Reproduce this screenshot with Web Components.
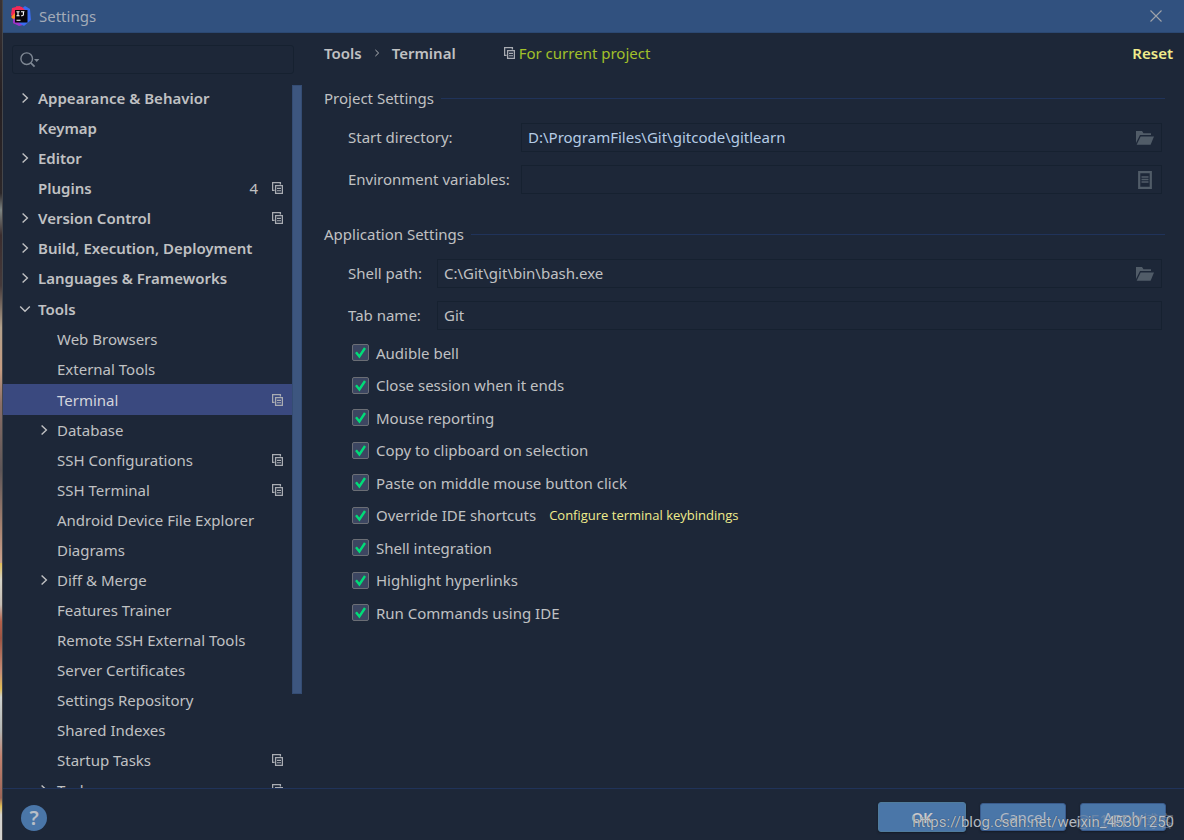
<!DOCTYPE html>
<html lang="en">
<head>
<meta charset="utf-8">
<title>Settings</title>
<style>
  :root {
    --bg: #1d2738;
    --text: #c0c1c3;
    --line: #20335a;
    --field-line: #162130;
    --button: #4a76a8;
    --link: #f0ec8c;
  }
  body {
    margin: 0;
    background: var(--bg);
    color: var(--text);
    font: 15px/20px "Noto Sans", "Open Sans", sans-serif;
  }
</style>
</head>
<body>
<settings-window></settings-window>

<script>
const ICONS = {
  copy: ['0 0 11 12', '<path d="M2.6 8.4H.6V.6h7.8v2" fill="none" stroke="currentColor" stroke-width="1.3"/><path d="M3.6 3.6h6.8v7.8H3.6z" fill="none" stroke="currentColor" stroke-width="1.3"/><path d="M5 6.4h4M5 8.8h4" stroke="currentColor" stroke-width="1.1"/>'],
  right: ['0 0 12 12', '<path d="M3.6 1.4 8.4 6l-4.8 4.6" fill="none" stroke="currentColor" stroke-width="1.4"/>'],
  down: ['0 0 12 12', '<path d="M1.2 3.5 6 8.3l4.8-4.8" fill="none" stroke="currentColor" stroke-width="1.4"/>'],
  folder: ['0 0 18 14', '<path d="M0 12V0h6l1.5 2.2H15v1.9H4z" fill="currentColor"/><path d="M4.6 5.4H18l-3.4 8.3H.7z" fill="currentColor"/>'],
  list: ['0 0 14 18', '<path d="M1.2 1.2h11.6v15.6H1.2z" fill="none" stroke="currentColor" stroke-width="2.2"/><path d="M3.5 6h7M3.5 8.5h7M3.5 11h7" stroke="currentColor" stroke-width="1.4"/>'],
  search: ['0 0 20 16', '<circle cx="6.7" cy="6.7" r="5.8" fill="none" stroke="currentColor" stroke-width="1.4"/><path d="m10.8 10.8 3.8 3.8" stroke="currentColor" stroke-width="1.8"/><path d="M14 7h5.4l-2.7 3z" fill="currentColor"/>'],
  close: ['0 0 12 12', '<path d="m.5.5 11 11M11.5.5l-11 11" stroke="currentColor" stroke-width="1.1"/>'],
  logo: ['0 0 20 20', '<path d="M1 2 9 0l4 8-8 10-3-1 1-5-3-3z" fill="#f52a58"/><path d="m0 11 4-4 4 6-4 2z" fill="#f98b24"/><path d="m2 13 6-2 4 8-4 1-6-3z" fill="#9b35c9"/><path d="m10 3 4-3 5 3 1 11-7 6-5-3z" fill="#396cf0"/><path d="m5 0 6 1 3 3-7 1z" fill="#f52a58"/><path d="M4 4h12.5v12.5H4z" fill="#080508"/><path d="M5.4 5.7h3.2M7 5.7v4M5.4 9.7h3.2M10 5.7h3.4M12.4 5.7v2.8q0 1.2-1.3 1.2h-1M5.5 14.3h4" stroke="#fff" stroke-width="1.1" fill="none"/>']
};

function define(name, html, setup) {
  const template = document.createElement('template');
  template.innerHTML = html;
  customElements.define(name, class extends HTMLElement {
    connectedCallback() {
      if (this.shadowRoot) return;
      const root = this.attachShadow({ mode: 'open' });
      root.append(template.content.cloneNode(true));
      if (setup) setup(this, root);
    }
  });
}

define('ui-icon', `
  <style>
    :host { display: block; flex: none; width: 12px; height: 12px; }
    :host([name=copy]) { width: 11px; color: #a9acb2; }
    svg { display: block; width: 100%; height: 100%; }
  </style>
  <svg aria-hidden="true"></svg>`, (host, root) => {
  const [box, body] = ICONS[host.getAttribute('name')];
  const svg = root.querySelector('svg');
  svg.setAttribute('viewBox', box);
  svg.innerHTML = body;
});

define('title-bar', `
  <style>
    :host { display: flex; align-items: center; height: 32px; padding: 0 22px 0 8px; background: #31517f; border-bottom: 1px solid #2b4872; color: #a3abb8; }
    .logo { width: 20px; height: 20px; margin-right: 8px; }
    h1 { flex: 1; margin: 0; font: inherit; }
    button { padding: 0; border: 0; background: none; color: #a0a4aa; }
  </style>
  <ui-icon class="logo" name="logo"></ui-icon>
  <h1><slot></slot></h1>
  <button aria-label="Close"><ui-icon name="close"></ui-icon></button>`);

define('search-box', `
  <style>
    :host { display: flex; align-items: center; height: 29px; box-sizing: border-box; border: 1px solid var(--field-line); border-radius: 3px; padding: 0 7px; color: #7f8894; }
    ui-icon { width: 20px; height: 16px; }
    input { flex: 1; min-width: 0; border: 0; background: none; color: var(--text); font: inherit; outline: 0; }
  </style>
  <ui-icon name="search"></ui-icon>
  <input type="text" aria-label="Search settings">`);

define('tree-item', `
  <style>
    :host { display: block; }
    a { display: flex; align-items: center; height: 30px; padding: 0 9px 0 16px; color: inherit; text-decoration: none; }
    :host([child]) a { padding-left: 35px; }
    :host([top]) a { font-weight: 600; }
    :host([arrow=down]) a, :host([selected]) a { height: 31px; }
    :host([selected]) a { background: #3a497f; color: #d3d5dc; }
    .arrow { width: 12px; height: 12px; margin-right: 7px; }
    .label { flex: 1; white-space: nowrap; }
    .count { font-weight: 400; margin-right: 14px; }
  </style>
  <a href="#"><span class="arrow"></span><span class="label"><slot></slot></span></a>`, (host, root) => {
  const link = root.querySelector('a');
  const arrow = host.getAttribute('arrow');
  if (arrow) root.querySelector('.arrow').innerHTML = `<ui-icon name="${arrow}"></ui-icon>`;
  if (host.hasAttribute('count')) link.insertAdjacentHTML('beforeend', `<span class="count">${host.getAttribute('count')}</span>`);
  if (host.hasAttribute('project')) link.insertAdjacentHTML('beforeend', '<ui-icon name="copy"></ui-icon>');
});

define('settings-sidebar', `
  <style>
    :host { display: flex; flex-direction: column; flex: 0 0 299px; min-height: 0; }
    search-box { margin: 12px 8px 9px 9px; }
    .scroller { display: flex; flex: 1; min-height: 0; }
    nav { flex: 1; overflow: hidden; }
    .bar { width: 10px; box-sizing: border-box; height: 609px; max-height: 100%; margin-top: 2px; background: #3d567f; border: 1px solid #344c73; }
  </style>
  <search-box></search-box>
  <div class="scroller">
    <nav aria-label="Settings categories">
      <tree-item top arrow="right">Appearance &amp; Behavior</tree-item>
      <tree-item top>Keymap</tree-item>
      <tree-item top arrow="right">Editor</tree-item>
      <tree-item top count="4" project>Plugins</tree-item>
      <tree-item top arrow="right" project>Version Control</tree-item>
      <tree-item top arrow="right">Build, Execution, Deployment</tree-item>
      <tree-item top arrow="right">Languages &amp; Frameworks</tree-item>
      <tree-item top arrow="down">Tools</tree-item>
      <tree-item child>Web Browsers</tree-item>
      <tree-item child>External Tools</tree-item>
      <tree-item child selected project>Terminal</tree-item>
      <tree-item child arrow="right">Database</tree-item>
      <tree-item child project>SSH Configurations</tree-item>
      <tree-item child project>SSH Terminal</tree-item>
      <tree-item child>Android Device File Explorer</tree-item>
      <tree-item child>Diagrams</tree-item>
      <tree-item child arrow="right">Diff &amp; Merge</tree-item>
      <tree-item child>Features Trainer</tree-item>
      <tree-item child>Remote SSH External Tools</tree-item>
      <tree-item child>Server Certificates</tree-item>
      <tree-item child>Settings Repository</tree-item>
      <tree-item child>Shared Indexes</tree-item>
      <tree-item child project>Startup Tasks</tree-item>
      <tree-item child arrow="right" project>Tasks</tree-item>
    </nav>
    <div class="bar"></div>
  </div>`);

define('page-header', `
  <style>
    :host { display: flex; align-items: center; height: 40px; padding-right: 11px; font-weight: 600; }
    .next { width: 8px; height: 8px; margin: 0 11px; }
    .scope { display: flex; align-items: center; gap: 4px; flex: 1; margin-left: 48px; color: #a2c02a; font-weight: 400; }
    a { color: var(--link); text-decoration: none; }
  </style>
  <span>Tools</span><ui-icon class="next" name="right"></ui-icon><span>Terminal</span>
  <span class="scope"><ui-icon name="copy"></ui-icon>For current project</span>
  <a href="#">Reset</a>`);

define('settings-group', `
  <style>
    :host { display: block; padding-right: 22px; }
    h2 { display: flex; align-items: center; gap: 7px; height: 30px; margin: 0 -3px 10px 0; font: inherit; }
    h2::after { content: ""; flex: 1; height: 1px; background: var(--line); }
    .fields { display: grid; gap: 13px; padding-left: 24px; }
  </style>
  <h2></h2>
  <div class="fields"><slot></slot></div>`, (host, root) => {
  root.querySelector('h2').textContent = host.getAttribute('heading');
});

define('settings-field', `
  <style>
    :host { display: flex; align-items: center; height: 29px; }
    label { flex: none; width: var(--label-width); padding-bottom: 2px; }
    .box { display: flex; align-items: center; flex: 1; height: 100%; box-sizing: border-box; border: 1px solid var(--field-line); padding: 0 7px 0 6px; }
    input { flex: 1; min-width: 0; padding: 0 0 2px; border: 0; background: none; color: var(--value, var(--text)); font: inherit; outline: 0; }
    button { display: flex; justify-content: center; width: 18px; padding: 0; border: 0; background: none; color: #515c68; }
    ui-icon[name=folder] { width: 18px; height: 14px; }
    ui-icon[name=list] { width: 14px; height: 18px; }
  </style>
  <label for="value"><slot></slot></label>
  <span class="box"><input id="value" type="text"></span>`, (host, root) => {
  root.querySelector('input').value = host.getAttribute('value') || '';
  const icon = host.getAttribute('icon');
  if (icon) root.querySelector('.box').insertAdjacentHTML('beforeend', `<button aria-label="Browse"><ui-icon name="${icon}"></ui-icon></button>`);
});

define('check-option', `
  <style>
    :host { display: flex; align-items: center; height: 32px; }
    :host(:nth-child(odd)) { height: 33px; }
    label { display: flex; align-items: center; gap: 7px; }
    input { appearance: none; width: 17px; height: 17px; margin: 0; border: 1px solid #6b6e75; border-radius: 2px; background: #3c4661; }
    input:checked { background: #3c4661 url('data:image/svg+xml,<svg xmlns="http://www.w3.org/2000/svg" viewBox="0 0 15 15"><path d="m3 7.2 3.4 4.3L12 3" fill="none" stroke="%2300dc78" stroke-width="2.4"/></svg>') center / 15px 15px; }
    ::slotted(a) { margin-left: 13px; color: var(--link); font-family: "Open Sans", "Noto Sans", sans-serif; font-size: 13px; text-decoration: none; }
  </style>
  <label><input type="checkbox" checked><span class="text"></span></label><slot></slot>`, (host, root) => {
  root.querySelector('.text').textContent = host.getAttribute('label');
});

define('terminal-page', `
  <style>
    :host { display: block; flex: 1; min-width: 0; padding-left: 22px; overflow: hidden; }
    .project { margin-top: 10px; --label-width: 173px; }
    .app { margin-top: 25px; --label-width: 89px; }
    .options { margin: 6px 0 0 28px; }
    .path { --value: #b5cce6; }
  </style>
  <page-header></page-header>
  <settings-group class="project" heading="Project Settings">
    <settings-field class="path" value="D:\\ProgramFiles\\Git\\gitcode\\gitlearn" icon="folder">Start directory:</settings-field>
    <settings-field icon="list">Environment variables:</settings-field>
  </settings-group>
  <settings-group class="app" heading="Application Settings">
    <settings-field value="C:\\Git\\git\\bin\\bash.exe" icon="folder">Shell path:</settings-field>
    <settings-field value="Git">Tab name:</settings-field>
  </settings-group>
  <div class="options">
    <check-option label="Audible bell"></check-option>
    <check-option label="Close session when it ends"></check-option>
    <check-option label="Mouse reporting"></check-option>
    <check-option label="Copy to clipboard on selection"></check-option>
    <check-option label="Paste on middle mouse button click"></check-option>
    <check-option label="Override IDE shortcuts"><a href="#">Configure terminal keybindings</a></check-option>
    <check-option label="Shell integration"></check-option>
    <check-option label="Highlight hyperlinks"></check-option>
    <check-option label="Run Commands using IDE"></check-option>
  </div>`);

define('dialog-button', `
  <style>
    :host { display: block; }
    button { width: 86px; height: 28px; padding: 0; border: 1px solid #3a5b8c; border-radius: 3px; background: var(--button); color: #b3b9c3; font: inherit; box-shadow: 0 1px 2px #141b27; }
    :host([primary]) button { width: 88px; height: 30px; border-color: #507c9c; color: #ccc9ca; font-weight: 600; }
  </style>
  <button><slot></slot></button>`);

define('dialog-footer', `
  <style>
    :host { position: relative; display: flex; align-items: center; height: 51px; padding: 0 18px; border-top: 1px solid var(--line); }
    .help { width: 26px; height: 26px; margin-top: 6px; padding: 0; border: 0; border-radius: 50%; background: var(--button); color: #b9bfc7; font: 600 20px/26px "Noto Sans", sans-serif; }
    .actions { display: flex; align-items: center; gap: 14px; margin: 5px 0 0 auto; }
    .mark { position: absolute; right: 10px; bottom: 8px; white-space: nowrap; pointer-events: none; }
    .site { color: #8c97a8; opacity: .5; font: 16px/20px "Liberation Sans", "Noto Sans CJK SC", sans-serif; }
    .url { color: #c3c8cf; opacity: .9; font: 15px/20px Roboto, sans-serif; text-shadow: 0 0 1px #1d2738; }
  </style>
  <button class="help" aria-label="Help">?</button>
  <div class="actions">
    <dialog-button primary>OK</dialog-button>
    <dialog-button>Cancel</dialog-button>
    <dialog-button>Apply</dialog-button>
  </div>
  <span class="mark site">@51CTO博客</span>
  <span class="mark url">https://blog.csdn.net/weixin_45301250</span>`);

define('settings-window', `
  <style>
    :host { display: grid; grid-template-columns: 3px minmax(0, 1fr); height: 100vh; overflow: hidden; }
    .desktop { border-right: 1px solid #45464a; background: linear-gradient(#3a3335, #251f22 12%, #2c2729 23%, #7e8583 25%, #3b2d2e 28%, #453a3b 34%, #b3a18c 39%, #c69c82 44%, #8b6f66 48%, #5e5658 56%, #a98472 63%, #cba28e 67%, #e2bd55 67%, #d5d4c8 69%, #c4bdb5 72%, #b5614b 74%, #9d5544 76%, #c78e77 80%, #e2bd55 82%, #ced2d0 83%, #b4b7b5 87%, #c38371 90%, #9d6557 95%, #e0c057 96%, #d4d3cf 97%); }
    main { display: flex; flex-direction: column; min-height: 0; }
    .body { display: flex; flex: 1; min-height: 0; }
  </style>
  <div class="desktop"></div>
  <main>
    <title-bar>Settings</title-bar>
    <div class="body">
      <settings-sidebar></settings-sidebar>
      <terminal-page></terminal-page>
    </div>
    <dialog-footer></dialog-footer>
  </main>`);
</script>
</body>
</html>
